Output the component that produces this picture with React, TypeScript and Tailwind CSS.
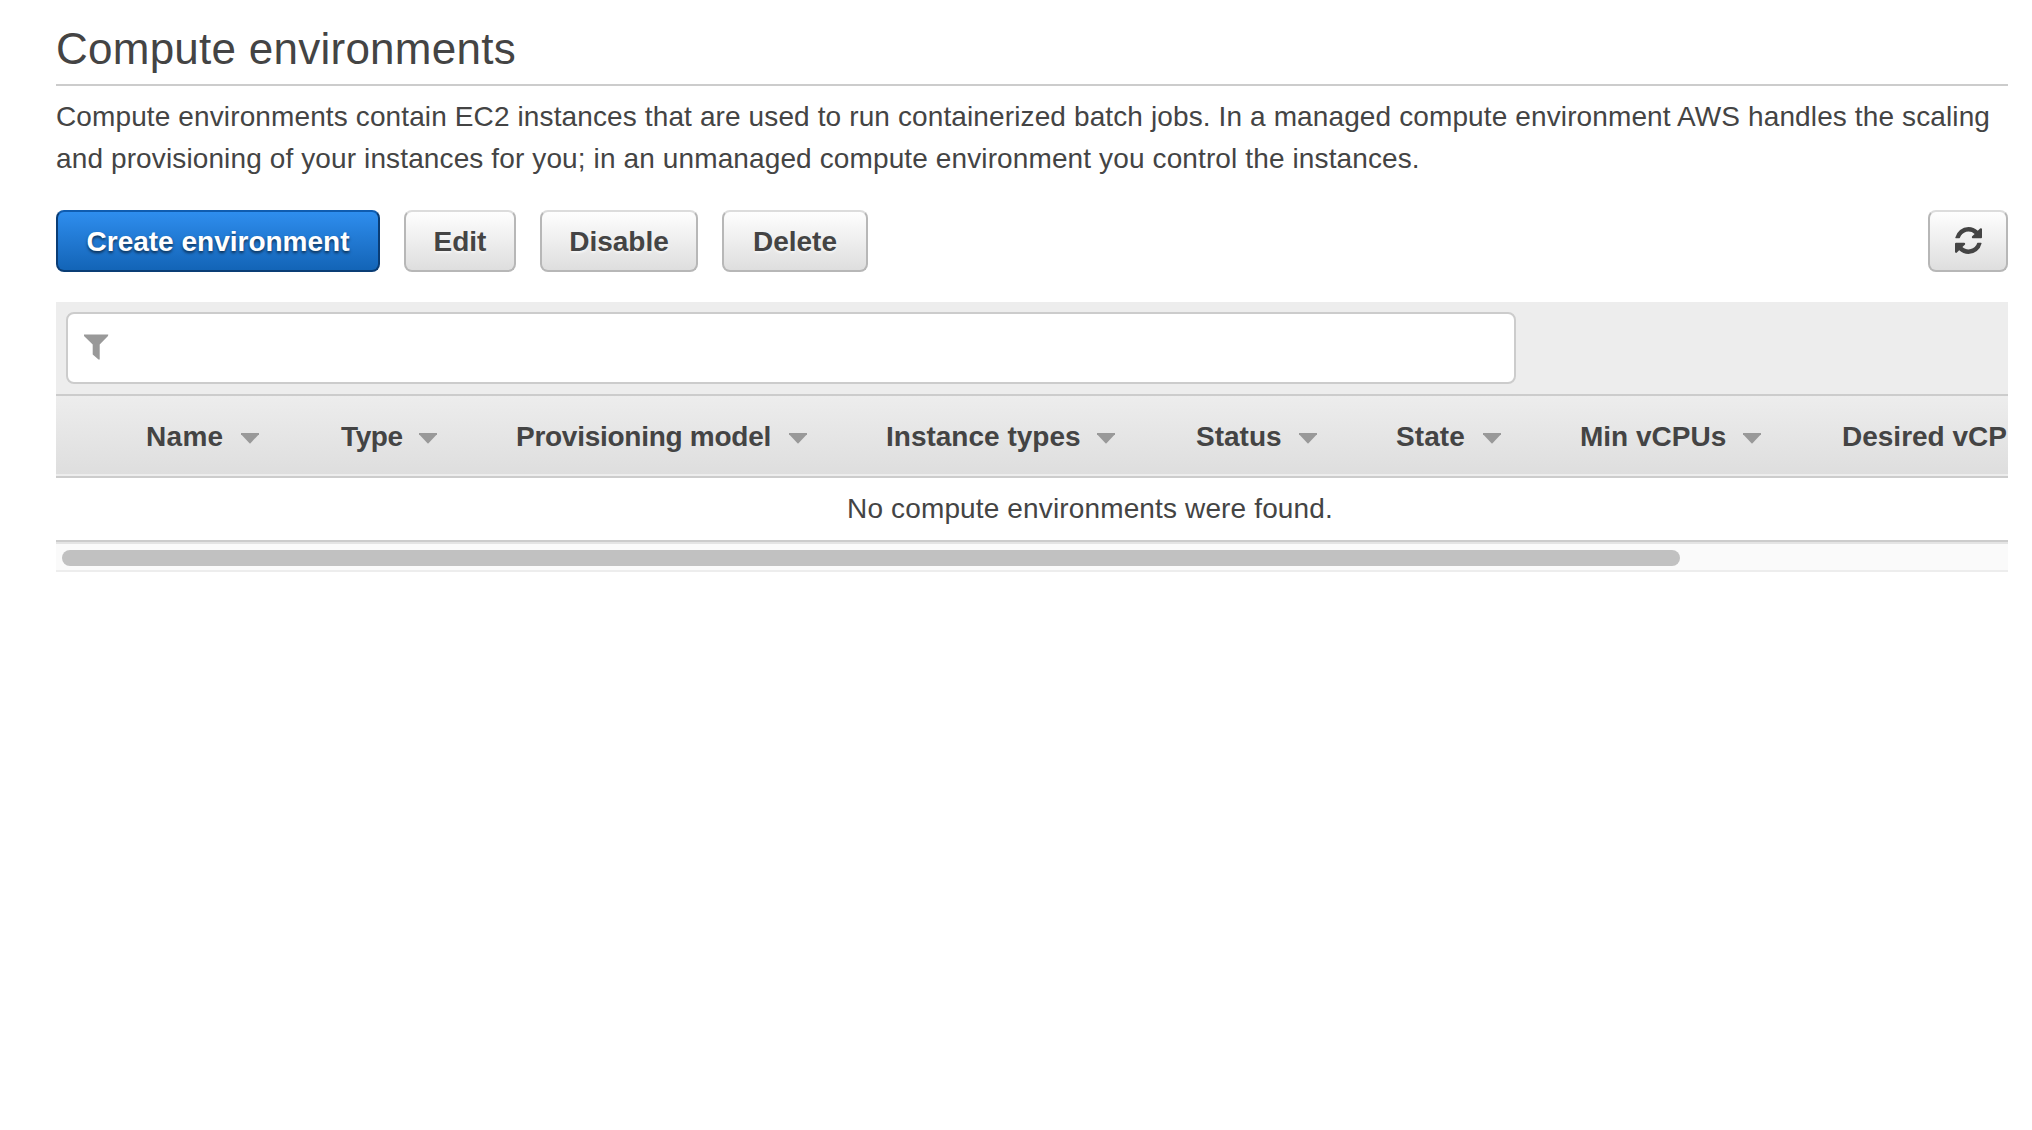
import React from "react";

type Column = { label: string; width: string; labelStyle: string };

const columns: Column[] = [
  { label: "Name", width: "w-[195px]", labelStyle: "w-[95px] tracking-[0.3px]" },
  { label: "Type", width: "w-[175px]", labelStyle: "w-[78px] tracking-[-0.4px]" },
  { label: "Provisioning model", width: "w-[370px]", labelStyle: "w-[273px] tracking-[-0.27px]" },
  { label: "Instance types", width: "w-[310px]", labelStyle: "w-[211px]" },
  { label: "Status", width: "w-[200px]", labelStyle: "w-[103px]" },
  { label: "State", width: "w-[184px]", labelStyle: "w-[87px] tracking-[0.1px]" },
  { label: "Min vCPUs", width: "w-[262px]", labelStyle: "w-[163px]" },
];

function GreyButton({ className, children, label }: { className: string; children: React.ReactNode; label?: string }) {
  return (
    <button
      aria-label={label}
      className={`flex h-[62px] items-center justify-center rounded-lg border-2 border-[#b7b7b7] border-t-[#dcdcdc] bg-linear-to-b from-white to-[#dddddd] bg-origin-border pt-0.5 font-bold [text-shadow:0_2px_2px_#f5f5f5] ${className}`}
    >
      {children}
    </button>
  );
}

export default function App() {
  return (
    <main className="h-[1130px] overflow-hidden bg-white pr-6 pl-14 font-['Liberation_Sans',Arial,sans-serif] text-[28px] leading-[42px] text-[#444444]">
      <h1 className="h-[86px] border-b-2 border-[#cccccc] pt-[23px] text-[44px] leading-[52px] tracking-[0.25px] whitespace-nowrap">
        Compute environments
      </h1>
      <p className="pt-[10px] tracking-[0.12px] whitespace-nowrap">
        Compute environments contain EC2 instances that are used to run containerized batch jobs. In a managed compute environment AWS handles the scaling
        <br />
        and provisioning of your instances for you; in an unmanaged compute environment you control the instances.
      </p>
      <div className="mt-[30px] flex gap-6">
        <button className="flex h-[62px] w-[324px] items-center justify-center rounded-lg border-2 border-[#0a3d75] border-t-[#0f5cb0] bg-linear-to-b from-[#2f8ff0] to-[#1263b5] bg-origin-border pt-0.5 font-bold whitespace-nowrap text-white [text-shadow:0_2px_3px_rgba(0,0,0,0.6)]">
          Create environment
        </button>
        <GreyButton className="w-[112px]">Edit</GreyButton>
        <GreyButton className="w-[158px]">Disable</GreyButton>
        <GreyButton className="w-[146px]">Delete</GreyButton>
        <GreyButton className="ml-auto w-[80px]" label="Refresh">
          <svg viewBox="0 0 1536 1536" className="mb-1 size-[27px] fill-[#444444]">
            <path d="M1511 928q0 5-1 7-64 268-268 434.500T764 1536q-146 0-282.500-55T238 1324l-129 129q-19 19-45 19t-45-19-19-45V960q0-26 19-45t45-19h448q26 0 45 19t19 45-19 45l-137 137q71 66 161 102t187 36q134 0 250-65t186-179q11-17 53-117 8-23 30-23h192q13 0 22.500 9.500t9.500 22.500zM1536 128v448q0 26-19 45t-45 19h-448q-26 0-45-19t-19-45 19-45l138-138Q969 256 768 256q-134 0-250 65T332 500q-11 17-53 117-8 23-30 23H50q-13 0-22.500-9.500T18 608v-7q65-268 270-434.500T768 0q146 0 284 55.500T1297 212l130-129q19-19 45-19t45 19 19 45z" />
          </svg>
        </GreyButton>
      </div>
      <section className="mt-[30px] overflow-hidden">
        <div className="h-[92px] bg-[#ededed] p-2.5">
          <div className="flex h-[72px] w-[1450px] items-start rounded-lg border-2 border-[#cccccc] bg-white pt-5 pl-[15px]">
            <svg viewBox="0 0 26 26" className="size-[26px] fill-[#999999]">
              <path d="M1 0.500H25.300L25 2L16.700 10.500V25.500H15.500L9.700 20.500V10.500L1 2Z" />
            </svg>
          </div>
        </div>
        <div className="flex h-[82px] border-t-2 border-b-2 border-t-[#cccccc] border-b-[#ededed] bg-linear-to-b from-[#ededed] to-[#dedede] pl-[90px] font-bold">
          {columns.map((column) => (
            <div key={column.label} className={`flex shrink-0 pt-5 whitespace-nowrap ${column.width}`}>
              <span className={`shrink-0 ${column.labelStyle}`}>{column.label}</span>
              <svg viewBox="0 0 18 11" className="mt-[17px] h-[11px] w-[18px] shrink-0 fill-[#999999]">
                <path d="M0 0H18V1.200L9 10.700L0 1.200Z" />
              </svg>
            </div>
          ))}
          <div className="shrink-0 pt-5 whitespace-nowrap">Desired vCP</div>
        </div>
        <div className="flex h-[66px] justify-center border-y-2 border-[#cccccc] pt-[10px] pl-[116px] tracking-[0.14px] whitespace-nowrap">
          No compute environments were found.
        </div>
        <div className="h-[30px] border-t-2 border-b-2 border-t-[#e4e4e4] border-b-[#ededed] bg-[#fafafa] px-1.5 pt-1.5">
          <div className="h-4 w-[1618px] rounded-full bg-[#c1c1c1]" />
        </div>
      </section>
    </main>
  );
}
